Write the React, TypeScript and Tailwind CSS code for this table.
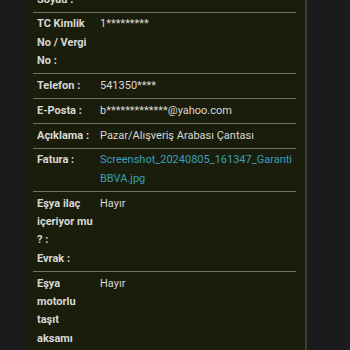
const rows: { label: string[]; value: string; link?: boolean }[] = [
  { label: ["Soyad :"], value: "" },
  { label: ["TC Kimlik No / Vergi No :"], value: "1*********" },
  { label: ["Telefon :"], value: "541350****" },
  { label: ["E-Posta :"], value: "b*************@yahoo.com" },
  { label: ["Açıklama :"], value: "Pazar/Alışveriş Arabası Çantası" },
  { label: ["Fatura :"], value: "Screenshot_20240805_161347_Garanti BBVA.jpg", link: true },
  { label: ["Eşya ilaç içeriyor mu ? :", "Evrak :"], value: "Hayır" },
  { label: ["Eşya motorlu taşıt aksamı"], value: "Hayır" },
];

export default function App() {
  return (
    <div
      className="w-[350px] h-[350px] overflow-hidden bg-[#1b1b1e] text-[11px] leading-[18.4px] text-[#d8d8d4]"
      style={{ fontFamily: "Roboto, 'Liberation Sans', sans-serif" }}
    >
      <div className="ml-[25px] w-[282px] h-[370px] bg-[#1b1d0c] border-r-2 border-[#3a3c36] pl-[8px] pr-[9px] -mt-[12px]">
        {rows.map((r, i) => (
          <div
            key={i}
            className={`flex py-[2.7px] px-[4px] ${i < rows.length - 1 ? "border-b border-[#66746c]" : ""}`}
          >
            <div className="w-[58px] shrink-0 font-bold mr-[5px]">
              {r.label.map((l) => (
                <div key={l}>{l}</div>
              ))}
            </div>
            <div className={`min-w-0 ${r.link ? "text-[#3a9fb8]" : ""}`}>{r.value}</div>
          </div>
        ))}
      </div>
    </div>
  );
}
